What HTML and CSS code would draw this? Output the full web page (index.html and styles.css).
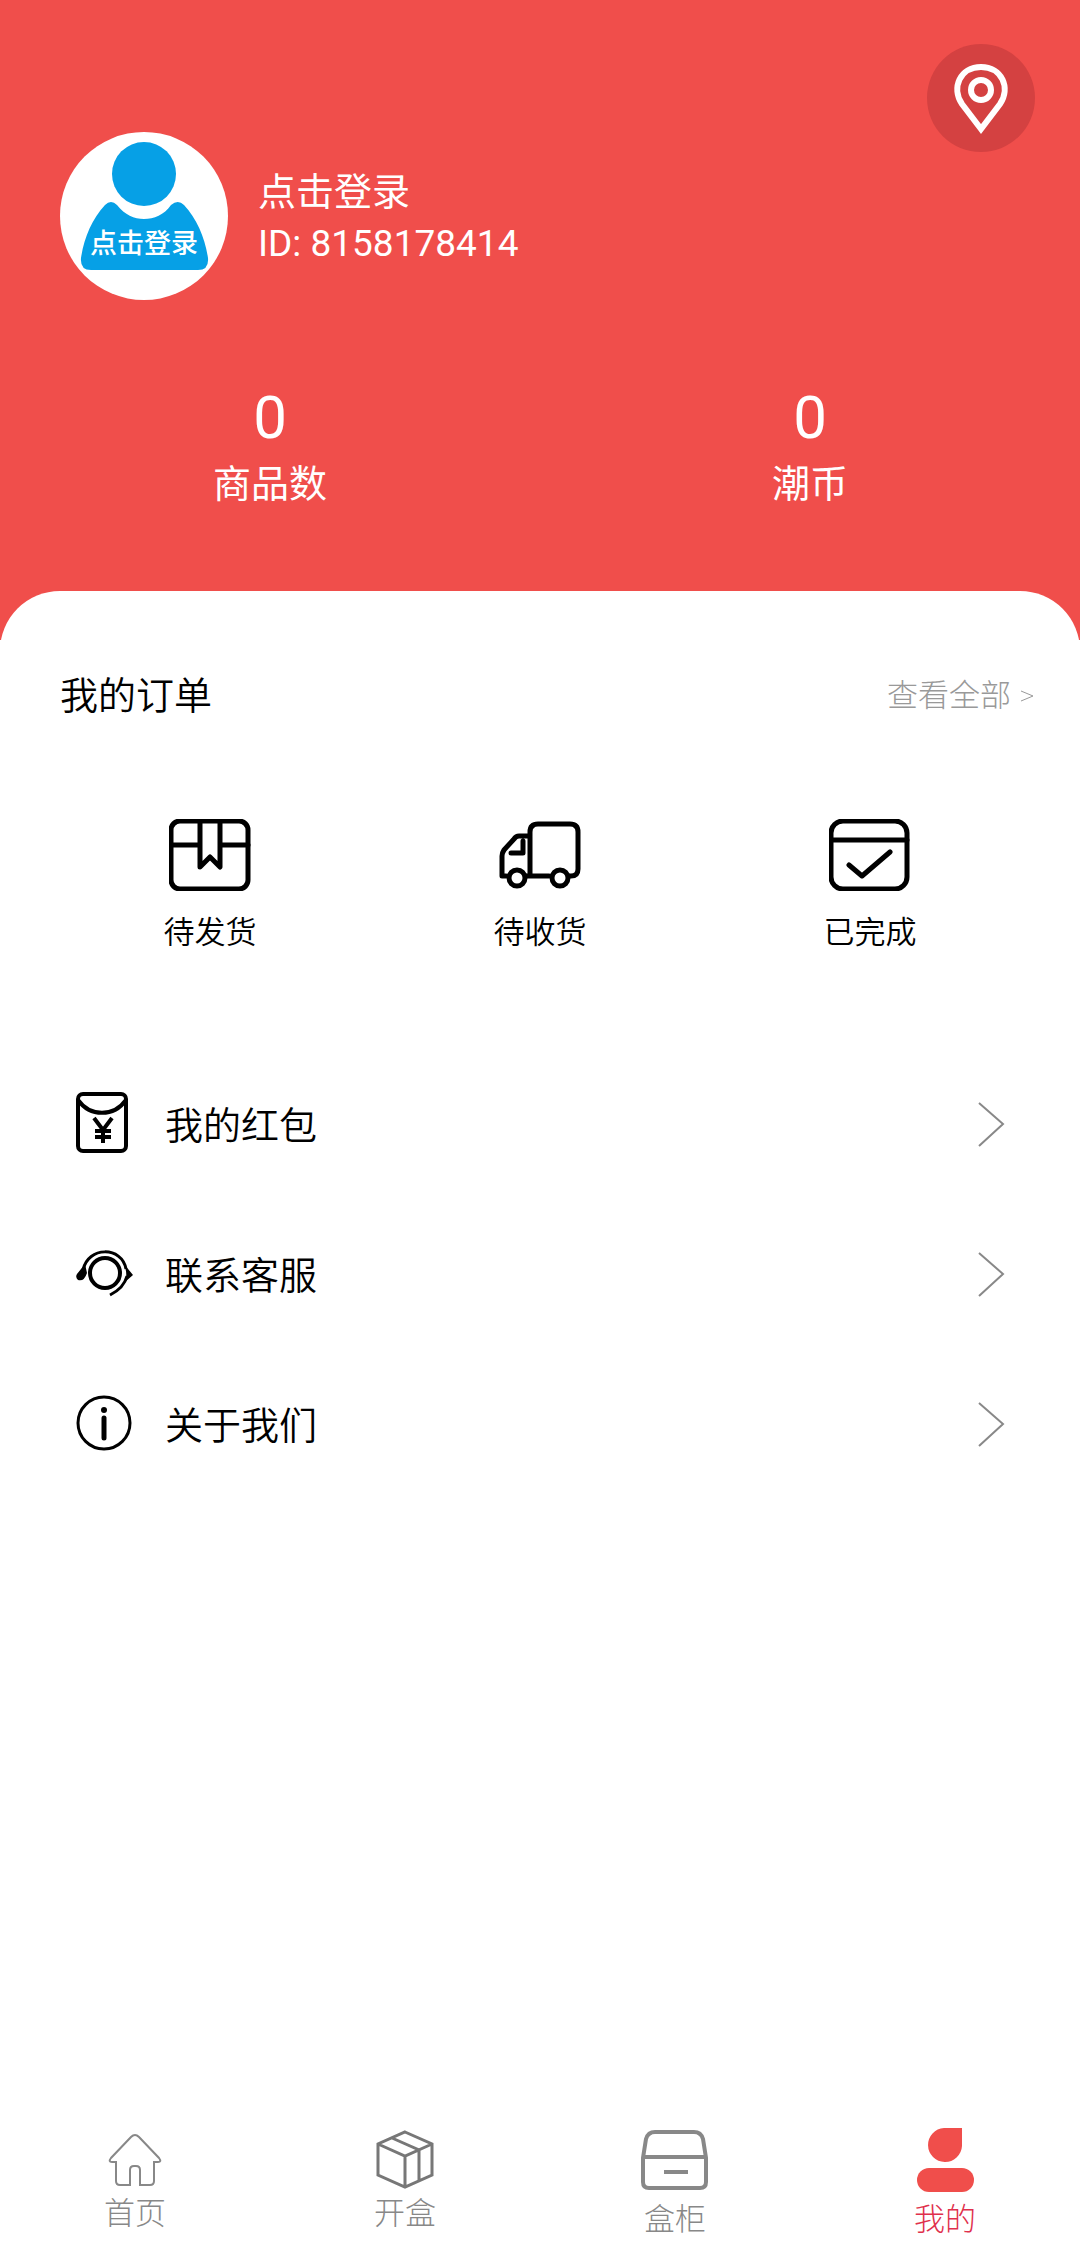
FILE: index.html
```html
<!DOCTYPE html>
<html lang="zh-CN">
<head>
<meta charset="utf-8">
<meta name="viewport" content="width=device-width, initial-scale=1">
<title>我的</title>
<link rel="stylesheet" href="styles.css">
</head>
<body>
<header class="header">
  <div class="top">
    <a class="profile" href="#login">
      <span class="avatar">
        <svg viewBox="0 0 168 168" aria-hidden="true">
          <circle cx="84" cy="42" r="32"/>
          <path d="M45 73Q51 67 57 73C65 83 74 87 84 87S104 83 111 73Q118 67 124 73C137 87 145 106 148 126Q149 138 138 138H31Q20 138 21 126C24 106 32 87 45 73Z"/>
        </svg>
        <span class="avatar-text">点击登录</span>
      </span>
      <span class="who"><span>点击登录</span><span class="uid">ID: 8158178414</span></span>
    </a>
    <button class="pin" type="button" aria-label="地址">
      <svg viewBox="0 0 108 108"><path d="M54 85L35 60C24 44 33 23 54 23S84 44 73 60Z"/><circle cx="54" cy="46" r="10"/></svg>
    </button>
  </div>
  <div class="stats">
    <div class="stat"><span class="stat-num">0</span><span>商品数</span></div>
    <div class="stat"><span class="stat-num">0</span><span>潮币</span></div>
  </div>
</header>
<main class="panel">
  <div class="orders-head">
    <h2 class="title">我的订单</h2>
    <a class="all" href="#orders">查看全部<svg viewBox="0 0 16 16" aria-hidden="true"><path d="M2 3L14 8L2 13"/></svg></a>
  </div>
  <nav class="orders">
    <a class="order" href="#ship">
      <svg viewBox="0 0 82 72"><rect x="2" y="2" width="77" height="68" rx="9"/><path d="M2 26H31M51 26H79M31 2V48L41 38L51 48V2"/></svg>
      待发货
    </a>
    <a class="order" href="#receive">
      <svg viewBox="0 0 82 72"><path d="M31 57V13Q31 5 39 5H71Q79 5 79 13V50Q79 57 72 57H70M50 57H27M31 17H20Q17 17 15 20L5 31Q3 34 3 37V57H7M24 22V34H12"/><circle cx="18" cy="59" r="8"/><circle cx="61" cy="59" r="8"/></svg>
      待收货
    </a>
    <a class="order" href="#done">
      <svg viewBox="0 0 82 72"><rect x="2" y="2" width="76" height="68" rx="12"/><path d="M2 21H78M20 46L33 57L61 33"/></svg>
      已完成
    </a>
  </nav>
  <nav class="menu">
    <a class="row" href="#bonus">
      <svg class="row-icon" viewBox="0 0 58 64"><rect x="3" y="2" width="48" height="57" rx="5"/><path d="M3 8C15 25 39 25 51 8"/><path d="M19 26L28 38L37 26M28 38V51M20 39H36M20 45H36"/></svg>
      <span class="row-text">我的红包</span>
      <svg class="chevron" viewBox="0 0 28 48"><path d="M2 3L26 24L2 46"/></svg>
    </a>
    <a class="row" href="#service">
      <svg class="row-icon" viewBox="0 0 58 64"><circle cx="30" cy="31" r="15"/><path class="thin" d="M8 28C13 4 47 4 51 27M52 34C50 42 43 49 35 53"/><path class="solid" d="M10 22L2 32Q0 35 3 38Q9 40 12 31ZM49 22L58 33L50 40Q53 32 49 22Z"/></svg>
      <span class="row-text">联系客服</span>
      <svg class="chevron" viewBox="0 0 28 48"><path d="M2 3L26 24L2 46"/></svg>
    </a>
    <a class="row" href="#about">
      <svg class="row-icon" viewBox="0 0 58 64"><circle class="thin" cx="29" cy="31" r="26"/><circle class="solid" cx="29" cy="18" r="3"/><path class="stem" d="M29 26V46"/></svg>
      <span class="row-text">关于我们</span>
      <svg class="chevron" viewBox="0 0 28 48"><path d="M2 3L26 24L2 46"/></svg>
    </a>
  </nav>
</main>
<nav class="tabs">
  <a class="tab" href="#home">
    <svg viewBox="0 0 70 64"><path d="M31 9Q35 5 39 9L59 30Q62 34 58 34H54V53Q54 57 50 57H40V42Q40 38 36 38H34Q30 38 30 42V57H20Q16 57 16 53V34H12Q8 34 11 30Z"/></svg>
    首页
  </a>
  <a class="tab dark" href="#open">
    <svg viewBox="0 0 70 64"><path d="M35 4L62 16V47L35 59L8 47V16ZM8 16L35 28L62 16M35 28V59M22 10L49 22V52"/></svg>
    开盒
  </a>
  <a class="tab cabinet" href="#cabinet">
    <svg class="tall" viewBox="0 0 70 70"><path d="M15 4H54Q61 4 63 11L66 30V54Q66 60 60 60H9Q3 60 3 54V30L6 11Q8 4 15 4ZM3 29H66"/><path d="M24 44H48"/></svg>
    盒柜
  </a>
  <a class="tab active" href="#mine" aria-current="page">
    <svg class="tall" viewBox="0 0 70 70"><path d="M34 0H52V18A17 17 0 1 1 34 0Z"/><rect x="7" y="40" width="57" height="24" rx="12"/></svg>
    我的
  </a>
</nav>
</body>
</html>
```
FILE: styles.css
```css
* { box-sizing: border-box; }

body {
  margin: 0;
  min-height: 100vh;
  display: flex;
  flex-direction: column;
  background: #fff;
  color: #000;
  font-family: Roboto, "Noto Sans CJK SC", sans-serif;
  font-size: 38px;
  font-weight: 350;
  line-height: 52px;
}

a { color: inherit; text-decoration: none; }
svg { display: block; fill: none; stroke: currentColor; }

.header {
  padding: 44px 0 130px;
  background: #f04e4b;
  color: #fff;
  font-weight: 400;
}
.top {
  display: flex;
  justify-content: space-between;
  align-items: flex-start;
  padding: 0 45px 0 60px;
}
.profile {
  display: flex;
  align-items: center;
  gap: 30px;
  padding-top: 88px;
}
.avatar {
  position: relative;
  width: 168px;
  height: 168px;
  border-radius: 50%;
  background: #fff;
}
.avatar svg { fill: #06a0e6; stroke: none; }
.avatar-text {
  position: absolute;
  inset: 94px 0 auto;
  text-align: center;
  font-size: 27px;
  font-weight: 500;
  line-height: 36px;
}
.who {
  display: flex;
  flex-direction: column;
  padding-top: 4px;
}
.uid { font-size: 37px; }
.pin {
  width: 108px;
  height: 108px;
  padding: 0;
  border: 0;
  border-radius: 50%;
  background: #d44141;
  color: #fff;
}
.pin svg { stroke-width: 6; }

.stats {
  display: grid;
  grid-template-columns: 1fr 1fr;
  padding-top: 86px;
}
.stat {
  display: flex;
  flex-direction: column;
  align-items: center;
  gap: 8px;
}
.stat-num { font-size: 60px; line-height: 64px; }

.panel {
  flex: 1;
  margin-top: -49px;
  padding-top: 79px;
  border-radius: 60px 60px 0 0;
  background: #fff;
}
.orders-head {
  display: flex;
  justify-content: space-between;
  align-items: center;
  padding: 0 45px 0 60px;
}
.title { margin: 0; font-size: 38px; font-weight: 350; }
.all {
  display: flex;
  align-items: center;
  gap: 8px;
  color: #999;
  font-size: 31px;
  font-weight: 300;
}
.all svg { width: 16px; stroke-width: 1; }

.orders {
  display: grid;
  grid-template-columns: repeat(3, 1fr);
  padding: 97px 45px 94px;
}
.order {
  display: flex;
  flex-direction: column;
  align-items: center;
  gap: 20px;
  font-size: 31px;
  line-height: 44px;
}
.order svg { width: 82px; height: 72px; stroke-width: 5; stroke-linecap: round; stroke-linejoin: round; }

.row {
  display: flex;
  align-items: center;
  gap: 32px;
  height: 150px;
  padding: 0 75px;
}
.row-icon { width: 58px; height: 64px; stroke-width: 4; }
.row-text { flex: 1; padding-top: 4px; }
.row-icon .thin { stroke-width: 3; }
.row-icon .stem { stroke-width: 5; stroke-linecap: round; }
.row-icon .solid { fill: currentColor; stroke: none; }
.chevron { width: 28px; height: 48px; color: #888; stroke-width: 2; }

.tabs {
  display: grid;
  grid-template-columns: repeat(4, 1fr);
  padding-bottom: 14px;
  background: #fff;
}
.tab {
  display: flex;
  flex-direction: column;
  align-items: center;
  color: #888;
  font-size: 31px;
  font-weight: 300;
  line-height: 44px;
}
.tab svg { width: 70px; height: 64px; stroke-width: 2; }
.tab .tall { height: 70px; }
.tab.dark svg { color: #777; stroke-width: 3; }
.tab.cabinet svg { stroke-width: 4; }
.tab.active { color: #e0304c; }
.tab.active svg { fill: #f04e4b; stroke: none; }
```
